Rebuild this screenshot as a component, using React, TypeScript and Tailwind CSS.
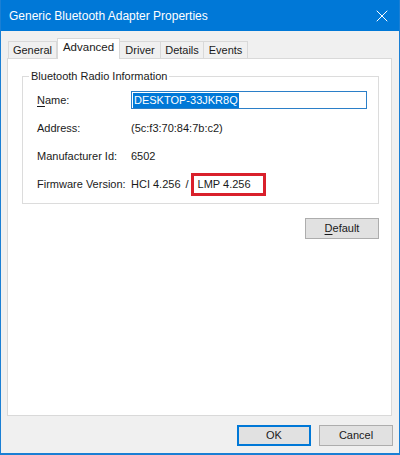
import { X } from "lucide-react";

const tabs = [
  { label: "General", w: "w-[49px]" },
  { label: "Advanced", w: "w-[63px]", active: true },
  { label: "Driver", w: "w-[41px]" },
  { label: "Details", w: "w-[43px]" },
  { label: "Events", w: "w-[44px]" },
];

export default function App() {
  return (
    <div
      className="flex h-[455px] w-[400px] flex-col border-x border-b-2 border-[#1a7fd4] bg-[#f0f0f0] text-[11px] text-[#1a1a1a]"
      style={{ fontFamily: '"Liberation Sans", Arial, sans-serif' }}
    >
      {/* title bar */}
      <div className="flex h-[31px] shrink-0 items-center justify-between bg-[#0078d7] pl-[8px] pr-[7px] text-white">
        <span className="text-[12px]">Generic Bluetooth Adapter Properties</span>
        <X className="h-[20px] w-[20px]" strokeWidth={1.2} aria-hidden="true" />
      </div>

      {/* tabs */}
      <div className="mt-[7px] flex h-[20px] items-end pl-[7px]">
        {tabs.map((t) =>
          t.active ? (
            <div
              key={t.label}
              className={`relative z-10 -mb-px flex h-[21px] items-center justify-center border-x border-t border-[#d9d9d9] bg-white pb-[3px] text-[11.5px] ${t.w}`}
            >
              {t.label}
            </div>
          ) : (
            <div
              key={t.label}
              className={`flex h-[17px] items-center justify-center border-t border-r border-[#d9d9d9] pt-[1px] first:border-l ${t.w}`}
            >
              {t.label}
            </div>
          ),
        )}
      </div>

      {/* tab panel */}
      <div className="ml-[6px] flex h-[358px] w-[385px] flex-col border border-[#d9d9d9] bg-white pl-[14px] pr-[12px]">
        <fieldset className="mt-[10px] h-[135px] border border-[#dcdcdc]">
          <legend className="ml-[6px] px-[2px] leading-[14px]">Bluetooth Radio Information</legend>
          <div className="grid grid-cols-[94px_1fr] auto-rows-[28px] items-center pl-[14px] pr-[11px] pt-[3px]">
            <span>
              <span className="underline underline-offset-2">N</span>ame:
            </span>
            <div className="flex h-[18px] items-center border border-[#2b7fc8] px-[1px]">
              <span className="bg-[#0078d7] px-[1px] leading-[15px] text-white">DESKTOP-33JKR8Q</span>
            </div>

            <span>Address:</span>
            <span>(5c:f3:70:84:7b:c2)</span>

            <span>Manufacturer Id:</span>
            <span>6502</span>

            <span className="whitespace-nowrap">Firmware Version:</span>
            <div className="flex items-center whitespace-nowrap">
              <span>HCI 4.256</span>
              <span className="ml-[5px]">/</span>
              <span className="ml-[2px] flex h-[23px] w-[75px] items-center border-[3px] border-[#d9202b] pl-[4px]">
                LMP 4.256
              </span>
            </div>
          </div>
        </fieldset>

        <div className="mt-[14px] flex justify-end">
          <button
            type="button"
            className="h-[21px] w-[74px] border border-[#adadad] bg-[#e1e1e1]"
          >
            <span className="underline underline-offset-2">D</span>efault
          </button>
        </div>
      </div>

      {/* footer */}
      <div className="mt-[9px] flex justify-end gap-[8px] pr-[6px]">
        <button type="button" className="h-[21px] w-[74px] border-2 border-[#0078d7] bg-[#e1e1e1]">
          OK
        </button>
        <button type="button" className="h-[21px] w-[74px] border border-[#adadad] bg-[#e1e1e1]">
          Cancel
        </button>
      </div>
    </div>
  );
}
